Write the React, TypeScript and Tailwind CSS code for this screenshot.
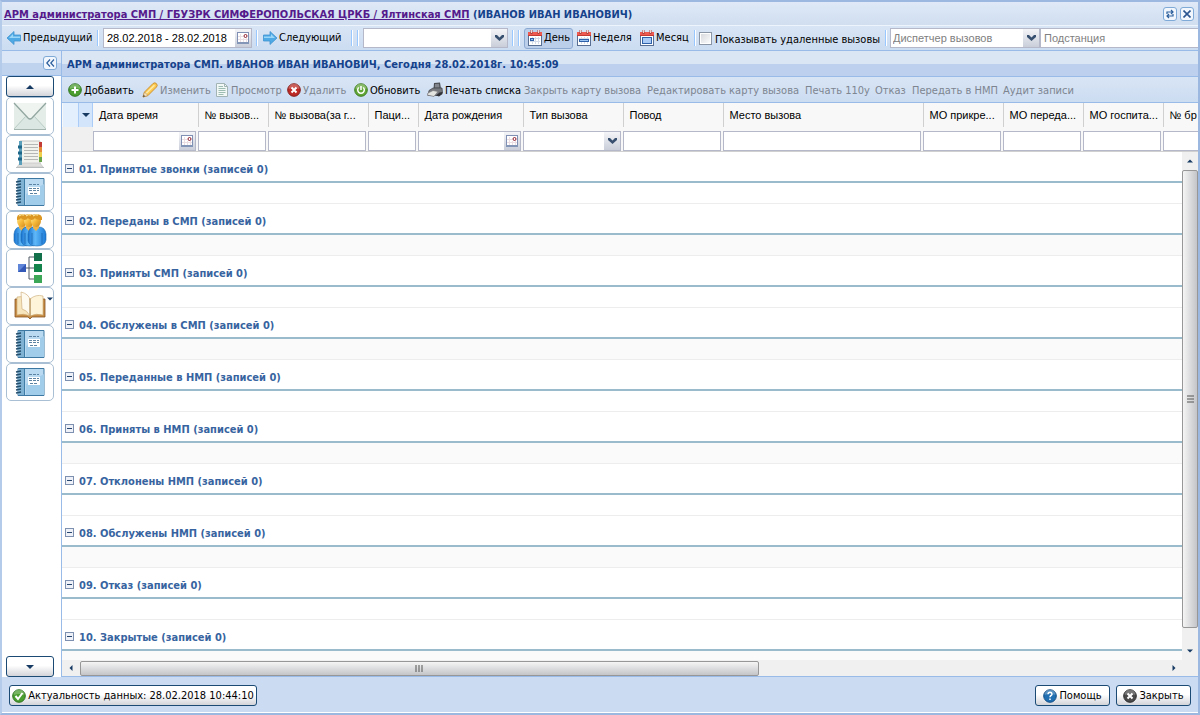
import { useState, type ReactNode } from "react";

type Column = {
  title: string;
  name: string;
  width: string;
  filter?: "date" | "select";
};

type ToolbarAction = {
  label: string;
  width: string;
  icon?: ReactNode;
  enabled?: boolean;
};

const columns: Column[] = [
  { title: "Дата время", name: "Дата время", width: "w-[105px]", filter: "date" },
  { title: "№ вызов...", name: "№ вызова за день", width: "w-[70px]" },
  { title: "№ вызова(за г...", name: "№ вызова за год", width: "w-[100px]" },
  { title: "Паци...", name: "Пациент", width: "w-[50px]" },
  { title: "Дата рождения", name: "Дата рождения", width: "w-[105px]", filter: "date" },
  { title: "Тип вызова", name: "Тип вызова", width: "w-[100px]", filter: "select" },
  { title: "Повод", name: "Повод", width: "w-[100px]" },
  { title: "Место вызова", name: "Место вызова", width: "w-[200px]" },
  { title: "МО прикре...", name: "МО прикрепления", width: "w-[80px]" },
  { title: "МО переда...", name: "МО передачи", width: "w-[80px]" },
  { title: "МО госпита...", name: "МО госпитализации", width: "w-[80px]" },
  { title: "№ бр", name: "№ бригады", width: "w-[80px]" }
];

const groups = [
  "01. Принятые звонки",
  "02. Переданы в СМП",
  "03. Приняты СМП",
  "04. Обслужены в СМП",
  "05. Переданные в НМП",
  "06. Приняты в НМП",
  "07. Отклонены НМП",
  "08. Обслужены НМП",
  "09. Отказ",
  "10. Закрытые"
];

function ArrowIcon({ flip = false }: { flip?: boolean }) {
  return (
    <svg width="16" height="16" viewBox="0 0 16 16" className={flip ? "shrink-0 -scale-x-100" : "shrink-0"}>
      <path d="M1 8 8 1.500v3.500H14.500v6H8V14.500Z" fill="#4fa9e4" stroke="#3f93d0" strokeWidth=".8" />
      <path d="M3 8 7 4V6.500h7v1.500Z" fill="#9ad6f7" />
    </svg>
  );
}

function DateIcon() {
  return (
    <svg width="14" height="14" viewBox="0 0 14 14">
      <rect x="1.500" y="1.500" width="11" height="10" fill="#fff" stroke="#7f90b4" />
      <rect x="1" y="11" width="12" height="2" fill="#8496b8" />
      <path d="M4.500 3v8M7.500 7v4M2 5.500h5M2 8.500h10M10.500 7v4" stroke="#ecdfe3" />
      <circle cx="9.500" cy="5" r="1.500" fill="#fff" stroke="#8c1c2c" />
    </svg>
  );
}

function CalendarIcon({ mode }: { mode: "day" | "week" | "month" }) {
  return (
    <svg width="16" height="16" viewBox="0 0 16 16" className="shrink-0">
      <rect x="1.500" y="2.500" width="13" height="13" fill="#fff" stroke="#5a6f94" />
      <path d="M1 2h14v4H1z" fill="#ee5a50" />
      <path d="M1 5h14v1H1z" fill="#c43a33" />
      <path d="M4.500 0v4M11.500 0v4" stroke="#a5433c" strokeWidth="2" />
      <path d="M4.500 0v3M11.500 0v3" stroke="#f4d6d2" strokeWidth="1" />
      <path d="M3 8.500h10M3 11.500h10M5.500 7v7M8.500 7v7M11.500 7v7" stroke="#d3dce8" />
      {mode === "day" && <rect x="3.500" y="8.500" width="3" height="2" fill="#9cc4f2" stroke="#2f61a8" />}
      {mode === "week" && <rect x="3.500" y="9.500" width="9" height="2" fill="#9cc4f2" stroke="#2f61a8" />}
      {mode === "month" && <rect x="3.500" y="7.500" width="9" height="6" fill="#a9cbf5" stroke="#2f61a8" />}
    </svg>
  );
}

function RoundIcon({ fill, edge, children }: { fill: string; edge: string; children: ReactNode }) {
  return (
    <svg width="14" height="14" viewBox="0 0 14 14" className="shrink-0">
      <circle cx="7" cy="7" r="6.300" fill={fill} stroke={edge} strokeWidth="1" />
      <path d="M1.500 6a5.500 5.500 0 0 1 11 0Q7 4 1.500 6Z" fill="#fff" opacity=".25" />
      <g stroke="#fff" strokeWidth="2" fill="none">
        {children}
      </g>
    </svg>
  );
}

function PencilIcon() {
  return (
    <svg width="16" height="16" viewBox="0 0 16 16" className="shrink-0">
      <path d="M1 15 2.500 10 11 1.500q2-1.500 3.500.200t0 3.300L6 13.500Z" fill="#fbc94f" stroke="#c98a2d" strokeWidth=".9" />
      <path d="m4 11.500 8.500-8.300" stroke="#fdeaa8" strokeWidth="1.600" />
      <path d="M1 15 2.500 10 6 13.500Z" fill="#f6e2bd" stroke="#b98b4a" strokeWidth=".6" />
      <path d="m1 15 .700-2.200 1.500 1.500Z" fill="#444" />
    </svg>
  );
}

function PageIcon() {
  return (
    <svg width="14" height="16" viewBox="0 0 14 16" className="shrink-0">
      <path d="M1.500 1.500h8l3 3v10h-11Z" fill="#f2f8f5" stroke="#a2b5b4" />
      <path d="M9.500 1.500v3h3" fill="none" stroke="#a2b5b4" />
      <path d="M3.500 4.500H8M3.500 6.500h7M3.500 8.500h7M3.500 10.500h7M3.500 12.500h5" stroke="#9dbdb2" />
    </svg>
  );
}

function PrinterIcon() {
  return (
    <svg width="16" height="16" viewBox="0 0 16 16" className="shrink-0">
      <path d="m7 1 6-.500L14 7H6.500Z" fill="#4a4d52" />
      <path d="m8 2 4-.300.500 4H7.800Z" fill="#82868c" />
      <path d="M2 8.500 6 6h9l.500 4.500-3.500 3H1Z" fill="#76797e" stroke="#3d3f43" strokeWidth=".7" />
      <path d="m1 11 5-2.500 5 1L7 14.500 0 13Z" fill="#e3e3e0" stroke="#77777a" strokeWidth=".7" />
      <path d="m9 13.500 3.500-3 3-.500v2L12 14.500Z" fill="#303236" />
    </svg>
  );
}

function Triangle({ dir, small = false }: { dir: "up" | "down" | "left" | "right"; small?: boolean }) {
  const shapes = {
    up: "M0 6 4 2l4 4Z",
    down: "M0 2h8L4 6Z",
    left: "M6 0v8L2 4Z",
    right: "M2 0v8l4-4Z"
  };
  return (
    <svg width={small ? 6 : 8} height={small ? 6 : 8} viewBox="0 0 8 8">
      <path d={shapes[dir]} fill="#173a63" />
    </svg>
  );
}

function MailIcon() {
  return (
    <svg width="34" height="30" viewBox="0 0 34 30">
      <path d="M1 2h32v26H1z" fill="#e4ede8" />
      <path d="m1 28 12-13h8l12 13Z" fill="#dae7e2" />
      <path d="M1 2h32L19 17q-2 2-4 0Z" fill="#eff4f1" />
      <path d="m1 2 14 15q2 2 4 0L33 2" fill="none" stroke="#93a7a1" strokeWidth="1.300" />
      <path d="m1 28 12-13M33 28 21 15" stroke="#b9cbc4" />
      <path d="M1 28.500h32" stroke="#a4b5b0" />
    </svg>
  );
}

function AddressBookIcon() {
  return (
    <svg width="32" height="32" viewBox="0 0 32 32">
      <path d="M2 29h28v1H2z" fill="#b8bcbd" />
      <path d="M6 3h20v23H6z" fill="#f1f1ee" stroke="#c3c4c1" />
      <path d="M6 25h20l3 4H3Z" fill="#dedfdd" stroke="#bfc1c0" strokeWidth=".6" />
      <path d="M10 6.500h14M10 9.500h14M10 12.500h14M10 15.500h14M10 18.500h14M10 21.500h14" stroke="#b5b7b6" />
      <path d="M5 3h3v24H5z" fill="#5b9fba" />
      <path d="M4 9h4M4 15h4M4 21h4" stroke="#1e6789" strokeWidth="3" />
      <path d="M25 4h3v5h-3z" fill="#c33c36" />
      <path d="M25 9h3v5h-3z" fill="#e58b38" />
      <path d="M25 14h3v5h-3z" fill="#edcf4b" />
      <path d="M25 19h3v5h-3z" fill="#6aa54c" />
    </svg>
  );
}

function NotebookIcon() {
  return (
    <svg width="32" height="32" viewBox="0 0 32 32">
      <path d="M4 2.500h26v27H4z" fill="#b9daf1" stroke="#3d78a3" />
      <path d="M4 3h6v26H4z" fill="#7fb2d3" />
      <path d="M12 29V18L30 8v21Z" fill="#a2cdea" />
      <path d="M10.500 3v26" stroke="#3f7ca6" />
      <path d="M14 11h12v8H14z" fill="#fff" />
      <path d="M15 8.500h10M15 12.500h10M15 14.500h10M16 17.500h8" stroke="#5c83a2" strokeDasharray="3 1" />
      <path
        d="m2 6 5-1M2 9l5-1M2 12l5-1M2 15l5-1M2 18l5-1M2 21l5-1M2 24l5-1M2 27l5-1"
        stroke="#244f6d"
        strokeWidth="1.300"
      />
    </svg>
  );
}

function PeopleIcon() {
  return (
    <svg width="34" height="34" viewBox="0 0 34 34">
      <defs>
        <linearGradient id="shirt" x1="0" x2="1">
          <stop offset="0" stopColor="#1873d1" />
          <stop offset=".4" stopColor="#5fb8f8" />
          <stop offset="1" stopColor="#1c7ad8" />
        </linearGradient>
        <linearGradient id="face" x1="0" x2="1" y2="1">
          <stop offset="0" stopColor="#fff0a0" />
          <stop offset=".5" stopColor="#f6b93a" />
          <stop offset="1" stopColor="#c9831c" />
        </linearGradient>
      </defs>
      {[9, 16, 23].map((x) => (
        <g key={x}>
          <path
            d={`M${x - 8} 21q1-7 6-7h5q6 0 7 7v6q-1 6-9 6t-9-5Z`}
            fill="url(#shirt)"
            stroke="#1a69ae"
            strokeWidth=".6"
          />
          <path d={`M${x - 4} 20v11M${x + 6} 20v11`} stroke="#1761ad" strokeWidth=".7" />
          <path d={`M${x - 3} 12h6v3l-3 3-3-3Z`} fill="#f0b347" />
          <ellipse cx={x} cy="8" rx="5" ry="6" fill="url(#face)" />
          <path d={`M${x - 5} 7q-1-6 5-6 7 0 6 6-6 0-7-2-1 2-4 2Z`} fill="#dc9723" />
          <path d={`M${x - 3} 3q2-2 5-1`} fill="none" stroke="#fff3b0" />
        </g>
      ))}
    </svg>
  );
}

function TreeIcon() {
  return (
    <svg width="28" height="32" viewBox="0 0 28 32">
      <path d="M9 16h4M18 5h-5v22h5M13 16h5" fill="none" stroke="#4f5a66" />
      <path d="M2 12h8v8H2z" fill="#3358b5" />
      <path d="M2 12h8L2 20Z" fill="#5f85d8" />
      <path d="M18 1h8v8h-8z" fill="#12704a" />
      <path d="M18 12h8v8h-8z" fill="#15834c" />
      <path d="M18 23h8v8h-8z" fill="#3ba757" />
    </svg>
  );
}

function OpenBookIcon() {
  return (
    <svg width="32" height="30" viewBox="0 0 32 30">
      <path d="M1 8h30v18H18l-2 2-2-2H1Z" fill="#c98d45" stroke="#875421" strokeWidth=".8" />
      <path d="M3 6q7-2 13 2v17q-6-3-13-1Z" fill="#f7e5be" stroke="#c8a66f" strokeWidth=".6" />
      <path d="M29 5q-7-2-13 3v17q6-3 13-1Z" fill="#fdf4da" stroke="#c8a66f" strokeWidth=".6" />
      <path d="M7 1q8 2 9 8v16Q13 19 8 18Z" fill="#fffaf0" stroke="#d0b080" strokeWidth=".7" />
      <path d="M16 8v17" stroke="#b28e59" />
    </svg>
  );
}

function CollapseIcon() {
  return (
    <svg width="9" height="9" viewBox="0 0 9 9" className="shrink-0">
      <rect x=".5" y=".5" width="8" height="8" fill="#eef2f8" stroke="#7d90b0" />
      <path d="M2 4.500h5" stroke="#26456f" />
    </svg>
  );
}

function Separator() {
  return <span className="h-4 w-[2px] shrink-0 border-r border-l border-r-white border-l-[#98c8ff]" />;
}

function Trigger({ kind }: { kind: "date" | "select" }) {
  return (
    <span className="pointer-events-none flex h-full w-4 shrink-0 items-center justify-center bg-linear-to-b from-[#f4f5f8] to-[#c9ced9]">
      {kind === "date" ? (
        <DateIcon />
      ) : (
        <svg width="9" height="6" viewBox="0 0 9 6">
          <path d="M0 0h2l2.500 2.500L7 0h2v2L4.500 6 0 2Z" fill="#38506f" />
        </svg>
      )}
    </span>
  );
}

function Combo({ label, text, width }: { label: string; text?: string; width: string }) {
  return (
    <div className={`flex h-5 shrink-0 border border-[#b5b8c8] bg-white ${width}`}>
      <select aria-label={label} className="min-w-0 flex-1 appearance-none px-[2px] text-[#808080] outline-none">
        <option>{text}</option>
      </select>
      <Trigger kind="select" />
    </div>
  );
}

function FilterField({ column }: { column: Column }) {
  return (
    <div className="flex h-5 border border-[#b5b8c8] bg-white">
      {column.filter === "select" ? (
        <select aria-label={column.name} className="min-w-0 flex-1 appearance-none outline-none">
          <option></option>
        </select>
      ) : (
        <input type="text" aria-label={column.name} className="w-full min-w-0 flex-1 px-1 outline-none" />
      )}
      {column.filter && <Trigger kind={column.filter} />}
    </div>
  );
}

function ToolButton({ label, marker, children }: { label: string; marker?: ReactNode; children: ReactNode }) {
  return (
    <button
      type="button"
      aria-label={label}
      className="relative flex h-[38px] w-12 items-center justify-center rounded-[5px] border border-[#a9bfd3] bg-white"
    >
      {children}
      {marker}
    </button>
  );
}

const frameButton =
  "flex items-center justify-center rounded-[3px] border border-[#1b4a75] bg-linear-to-b from-white from-45% to-[#d3d4d9] text-black";

const actions: ToolbarAction[] = [
  {
    label: "Добавить",
    width: "w-[74px]",
    enabled: true,
    icon: (
      <RoundIcon fill="#4a9d2f" edge="#2f7420">
        <path d="M7 3.500v7M3.500 7h7" />
      </RoundIcon>
    )
  },
  { label: "Изменить", width: "w-[73px]", icon: <PencilIcon /> },
  { label: "Просмотр", width: "w-[72px]", icon: <PageIcon /> },
  {
    label: "Удалить",
    width: "w-[67px]",
    icon: (
      <RoundIcon fill="#bd2a25" edge="#851b17">
        <path d="m4.500 4.500 5 5m0-5-5 5" />
      </RoundIcon>
    )
  },
  {
    label: "Обновить",
    width: "w-[73px]",
    enabled: true,
    icon: (
      <RoundIcon fill="#62a637" edge="#3f7d20">
        <path d="M4.800 4.500a3.300 3.300 0 1 0 4.400 0M7 3v4" strokeWidth="1.500" />
      </RoundIcon>
    )
  },
  { label: "Печать списка", width: "w-[97px]", enabled: true, icon: <PrinterIcon /> },
  { label: "Закрыть карту вызова", width: "w-[123px]" },
  { label: "Редактировать карту вызова", width: "w-[158px]" },
  { label: "Печать 110у", width: "w-[70px]" },
  { label: "Отказ", width: "w-[37px]" },
  { label: "Передать в НМП", width: "w-[91px]" },
  { label: "Аудит записи", width: "w-[72px]" }
];

const periods = [
  { id: "day", label: "День", width: "w-[49px]" },
  { id: "week", label: "Неделя", width: "w-[63px]" },
  { id: "month", label: "Месяц", width: "w-[54px]" }
] as const;

export default function App() {
  const [period, setPeriod] = useState<string>("day");
  const [showDeleted, setShowDeleted] = useState(false);
  const [collapsed, setCollapsed] = useState<string[]>([]);

  const toggleGroup = (name: string) => {
    setCollapsed((prev) => (prev.includes(name) ? prev.filter((item) => item !== name) : [...prev, name]));
  };

  return (
    <div className="flex h-screen flex-col overflow-hidden border-x-2 border-y-2 border-[#9db8e0] border-l-[#b4cbea] bg-[#cbdcf2] font-['DejaVu_Sans_Condensed','DejaVu_Sans',sans-serif] text-[11px] text-black">
      <header className="flex h-[23px] shrink-0 items-center justify-between bg-linear-to-b from-[#dfe9f7] to-[#d0def0] pr-1 pl-[2px]">
        <h1 className="pt-[3px] font-bold whitespace-nowrap text-[#15428b]">
          <a href="#" className="text-[#551a8b] underline">
            АРМ администратора СМП / ГБУЗРК СИМФЕРОПОЛЬСКАЯ ЦРКБ / Ялтинская СМП
          </a>{" "}
          (ИВАНОВ ИВАН ИВАНОВИЧ)
        </h1>
        <div className="flex gap-[3px]">
          <button
            type="button"
            aria-label="Обновить окно"
            className="flex size-[14px] items-center justify-center rounded-[3px] border border-[#7fa9d6] bg-[#f1f7fd]"
          >
            <svg width="10" height="10" viewBox="0 0 10 10" fill="none" stroke="#2d5f9c" strokeWidth="1.200">
              <path d="M2 5V3h5.500M6 1l2 2-2 2M8 5v2H2.500M4 5 2 7l2 2" />
            </svg>
          </button>
          <button
            type="button"
            aria-label="Закрыть окно"
            className="flex size-[14px] items-center justify-center rounded-[3px] border border-[#7fa9d6] bg-[#f1f7fd]"
          >
            <svg width="8" height="8" viewBox="0 0 8 8" stroke="#2b5590" strokeWidth="1.600">
              <path d="m.5.500 7 7m0-7-7 7" />
            </svg>
          </button>
        </div>
      </header>

      <div className="flex h-[26px] shrink-0 items-center overflow-hidden border-t border-b border-t-[#eef4fc] border-b-[#99bbe8] bg-linear-to-b from-[#d8e5f5] to-[#ccdcf1] pl-1 whitespace-nowrap">
        <button type="button" className="flex w-[91px] shrink-0 items-center gap-px">
          <ArrowIcon />
          <span className="pt-px">Предыдущий</span>
        </button>
        <Separator />
        <div className="mx-1 flex h-5 w-[149px] shrink-0 border border-[#b5b8c8] bg-white">
          <input
            type="text"
            aria-label="Период"
            defaultValue="28.02.2018 - 28.02.2018"
            className="min-w-0 flex-1 px-[3px] font-['Liberation_Sans',Arial,sans-serif] outline-none"
          />
          <Trigger kind="date" />
        </div>
        <Separator />
        <button type="button" className="ml-1 flex w-[89px] shrink-0 items-center gap-px">
          <ArrowIcon flip />
          <span className="pt-px">Следующий</span>
        </button>
        <div className="flex shrink-0 gap-1">
          <Separator />
          <Separator />
        </div>
        <div className="mx-1 shrink-0 font-['Liberation_Sans',Arial,sans-serif]">
          <Combo label="Диапазон" width="w-[145px]" />
        </div>
        <div className="flex shrink-0 gap-1">
          <Separator />
          <Separator />
        </div>
        <div className="mr-1 ml-1 flex shrink-0">
          {periods.map((item) => (
            <button
              key={item.id}
              type="button"
              aria-pressed={period === item.id}
              onClick={() => setPeriod(item.id)}
              className={`flex h-[21px] items-center gap-px rounded-[3px] border px-[2px] ${item.width} ${
                period === item.id ? "border-[#8ca9d1] bg-[#bccfea]" : "border-transparent"
              }`}
            >
              <CalendarIcon mode={item.id} />
              <span className="pt-px">{item.label}</span>
            </button>
          ))}
        </div>
        <Separator />
        <label className="ml-[3px] flex w-[186px] shrink-0 items-center gap-[3px]">
          <input
            type="checkbox"
            checked={showDeleted}
            onChange={(event) => setShowDeleted(event.target.checked)}
            className="size-[13px] shrink-0 appearance-none border border-[#8a96a5] bg-linear-to-br from-[#d4d6da] to-white outline-1 -outline-offset-2 outline-white checked:bg-[#38506f]"
          />
          <span className="pt-1">Показывать удаленные вызовы</span>
        </label>
        <Separator />
        <div className="ml-[3px] flex min-w-0 flex-1 font-['Liberation_Sans',Arial,sans-serif]">
          <Combo label="Диспетчер вызовов" text="Диспетчер вызовов" width="w-[150px]" />
          <input
            type="text"
            aria-label="Подстанция"
            placeholder="Подстанция"
            className="h-5 min-w-0 flex-1 border border-r-0 border-[#b5b8c8] bg-white px-[3px] outline-none placeholder:text-[#808080]"
          />
        </div>
      </div>

      <div className="flex min-h-0 flex-1">
        <aside className="flex w-[60px] shrink-0 flex-col border-r border-[#99bbe8] bg-white">
          <div className="flex h-[25px] shrink-0 items-center justify-end border-b border-[#99bbe8] bg-linear-to-b from-[#dbe7f7] from-50% to-[#bfd3ee] to-50% pr-1">
            <button
              type="button"
              aria-label="Свернуть панель"
              className="flex size-[14px] items-center justify-center rounded-[3px] border border-[#7fa9d6] bg-[#f1f7fd]"
            >
              <svg width="9" height="8" viewBox="0 0 9 8" fill="none" stroke="#2d5f9c" strokeWidth="1.200">
                <path d="M4 .5.800 4 4 7.500M8 .5 4.800 4 8 7.500" />
              </svg>
            </button>
          </div>
          <nav className="flex min-h-0 flex-1 flex-col items-start pl-1" aria-label="Инструменты">
            <button type="button" aria-label="Вверх" className={`${frameButton} h-[21px] w-12 shrink-0`}>
              <Triangle dir="up" />
            </button>
            <ToolButton label="Сообщения">
              <MailIcon />
            </ToolButton>
            <ToolButton label="Адресная книга">
              <AddressBookIcon />
            </ToolButton>
            <ToolButton label="Журнал вызовов">
              <NotebookIcon />
            </ToolButton>
            <ToolButton label="Сотрудники">
              <PeopleIcon />
            </ToolButton>
            <ToolButton label="Структура">
              <TreeIcon />
            </ToolButton>
            <ToolButton
              label="Справочники"
              marker={
                <span className="absolute top-2 right-0">
                  <Triangle dir="down" small />
                </span>
              }
            >
              <OpenBookIcon />
            </ToolButton>
            <ToolButton label="Журнал смен">
              <NotebookIcon />
            </ToolButton>
            <ToolButton label="Журнал отчетов">
              <NotebookIcon />
            </ToolButton>
            <button type="button" aria-label="Вниз" className={`${frameButton} mt-auto h-[21px] w-12 shrink-0`}>
              <Triangle dir="down" />
            </button>
          </nav>
        </aside>

        <main className="flex min-w-0 flex-1 flex-col bg-white">
          <h2 className="flex h-[26px] shrink-0 items-center border-b border-[#99bbe8] bg-linear-to-b from-[#dae6f4] from-50% to-[#bdd1ee] to-50% pt-1 pl-[5px] font-bold whitespace-nowrap text-[#15428b]">
            АРМ администратора СМП. ИВАНОВ ИВАН ИВАНОВИЧ, Сегодня 28.02.2018г. 10:45:09
          </h2>
          <div className="flex h-[26px] shrink-0 items-center overflow-hidden border-b border-[#99bbe8] bg-linear-to-b from-[#d8e5f5] to-[#ccdcf1] pl-[6px] whitespace-nowrap">
            {actions.map((action) => (
              <button
                key={action.label}
                type="button"
                disabled={!action.enabled}
                className={`flex h-5 shrink-0 items-center gap-[2px] text-black disabled:text-[#7d8590] ${action.width}`}
              >
                {action.icon}
                <span className="pt-[3px]">{action.label}</span>
              </button>
            ))}
          </div>

          <div className="shrink-0 overflow-hidden border-b border-[#d0d0d0] bg-[#f8f8f8] font-['Liberation_Sans',Arial,sans-serif]">
            <table className="w-[1181px] table-fixed border-collapse">
              <colgroup>
                <col className="w-[31px]" />
                {columns.map((column) => (
                  <col key={column.name} className={column.width} />
                ))}
              </colgroup>
              <thead>
                <tr className="h-6">
                  <th className="p-0">
                    <div className="ml-px flex h-6 items-center justify-end border-r border-[#aaccf6] bg-[#e3effd]">
                      <span className="flex h-full w-[14px] items-center justify-center border-l border-[#aaccf6] bg-[#d3e5fb]">
                        <Triangle dir="down" />
                      </span>
                    </div>
                  </th>
                  {columns.map((column) => (
                    <th
                      key={column.name}
                      scope="col"
                      className="border-r border-[#d0d0d0] pr-0 pl-[6px] text-left font-normal whitespace-nowrap"
                    >
                      {column.title}
                    </th>
                  ))}
                </tr>
                <tr className="h-6">
                  <td className="bg-[#f0f0f0] p-0"></td>
                  {columns.map((column) => (
                    <td key={column.name} className="py-0 pr-[2px] pl-0 align-bottom">
                      <FilterField column={column} />
                    </td>
                  ))}
                </tr>
              </thead>
            </table>
          </div>

          <div className="flex min-h-0 flex-1">
            <div className="min-w-0 flex-1 overflow-hidden">
              <table className="w-full border-separate border-spacing-0">
                {groups.map((name, index) => (
                  <tbody key={name}>
                    <tr>
                      <th className="h-[31px] border-b-2 border-[#99bbcc] p-0 text-left">
                        <button
                          type="button"
                          onClick={() => toggleGroup(name)}
                          className="flex items-center gap-[5px] pt-1 pl-[3px] font-bold text-[#3764a0]"
                        >
                          <CollapseIcon />
                          <span className="pt-[3px]">{name} (записей 0)</span>
                        </button>
                      </th>
                    </tr>
                    {!collapsed.includes(name) && (
                      <tr>
                        <td
                          className={`h-[21px] border-b border-[#ededed] p-0 ${index % 2 ? "bg-[#fafafa]" : "bg-white"}`}
                        ></td>
                      </tr>
                    )}
                  </tbody>
                ))}
              </table>
            </div>
            <div className="flex w-4 shrink-0 flex-col items-center bg-[#f0f0f0]">
              <span className="flex h-[18px] shrink-0 items-center">
                <Triangle dir="up" small />
              </span>
              <div className="min-h-0 w-full flex-1">
                <div className="flex h-[97%] items-center justify-center rounded-[2px] border border-[#979797] bg-linear-to-r from-[#f5f5f5] to-[#c4c5c8]">
                  <svg width="7" height="8" viewBox="0 0 7 8">
                    <path d="M0 1h7M0 4h7M0 7h7" stroke="#555" />
                  </svg>
                </div>
              </div>
              <span className="flex h-[18px] shrink-0 items-center">
                <Triangle dir="down" small />
              </span>
            </div>
          </div>

          <div className="flex h-[17px] shrink-0 items-center border-b border-[#99bbe8] bg-[#f0f0f0] pr-4">
            <span className="flex w-[18px] shrink-0 justify-center">
              <Triangle dir="left" small />
            </span>
            <div className="h-[15px] flex-1">
              <div className="flex h-full w-5/8 items-center justify-center rounded-[2px] border border-[#979797] bg-linear-to-b from-[#f5f5f5] to-[#c4c5c8]">
                <svg width="8" height="7" viewBox="0 0 8 7">
                  <path d="M1 0v7M4 0v7M7 0v7" stroke="#555" />
                </svg>
              </div>
            </div>
            <span className="flex w-4 shrink-0 justify-center">
              <Triangle dir="right" small />
            </span>
          </div>
        </main>
      </div>

      <footer className="flex h-9 shrink-0 items-center justify-between border-b border-white pt-[2px] pr-[7px] pl-[7px] whitespace-nowrap">
        <button type="button" className={`${frameButton} h-[21px] w-[248px] gap-[2px]`}>
          <RoundIcon fill="#4a9d2f" edge="#2f7420">
            <path d="m3.500 7 2.500 3 4.500-6" />
          </RoundIcon>
          <span className="pt-[2px]">Актуальность данных: 28.02.2018 10:44:10</span>
        </button>
        <div className="flex gap-[6px]">
          <button type="button" className={`${frameButton} h-[21px] w-[75px] gap-[2px]`}>
            <RoundIcon fill="#1f6fb2" edge="#164f86">
              <path d="M5 5.300q.200-2 2-2t2 1.700q0 1-1 1.500T7 8.300M7 9.500v1.500" strokeWidth="1.500" />
            </RoundIcon>
            <span className="pt-[2px]">Помощь</span>
          </button>
          <button type="button" className={`${frameButton} h-[21px] w-[75px] gap-[2px]`}>
            <RoundIcon fill="#4a4a4a" edge="#2c2c2c">
              <path d="m4.500 4.500 5 5m0-5-5 5" />
            </RoundIcon>
            <span className="pt-[2px]">Закрыть</span>
          </button>
        </div>
      </footer>
    </div>
  );
}
